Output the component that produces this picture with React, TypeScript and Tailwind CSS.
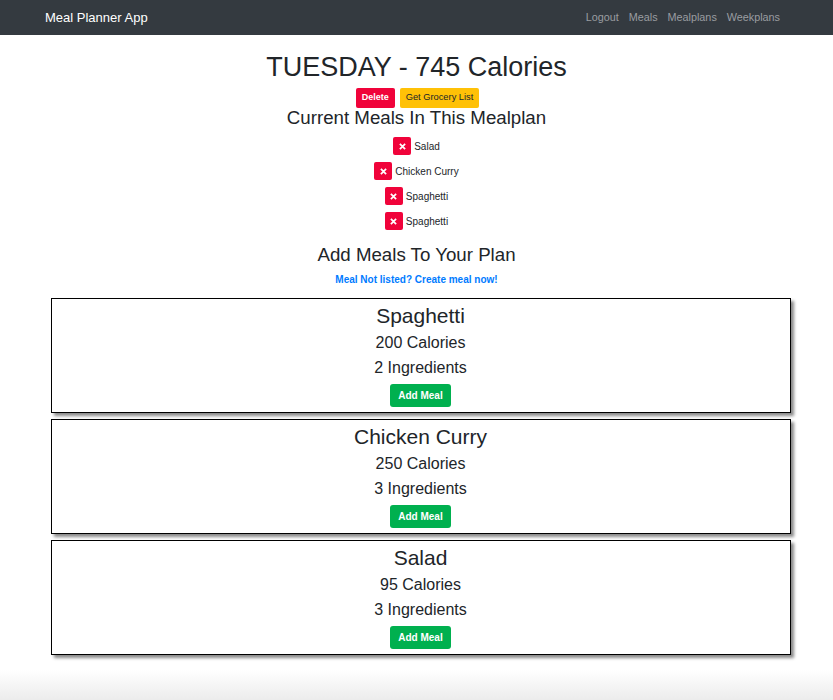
import React from "react"

const current = ["Salad", "Chicken Curry", "Spaghetti", "Spaghetti"]

const meals = [
  { name: "Spaghetti", calories: 200, ingredients: 2 },
  { name: "Chicken Curry", calories: 250, ingredients: 3 },
  { name: "Salad", calories: 95, ingredients: 3 },
]

function Navbar() {
  return (
    <nav className="h-[35px] bg-[#343a40] flex items-center justify-between pl-[45px] pr-[53px]">
      <span className="text-white text-[13px]">Meal Planner App</span>
      <div className="flex items-center gap-[10px] text-[10.8px] text-[#9a9da0]">
        <a>Logout</a>
        <a>Meals</a>
        <a>Mealplans</a>
        <a>Weekplans</a>
      </div>
    </nav>
  )
}

function MealCard({ name, calories, ingredients }: { name: string; calories: number; ingredients: number }) {
  return (
    <div className="h-[115px] border border-black bg-white shadow-[3px_3px_3px_#8a8a8a] flex flex-col items-center pt-[2px]">
      <h3 className="text-[21px] leading-[29px] text-[#212529]">{name}</h3>
      <p className="text-[16px] leading-[24px] mt-[1px] text-[#212529]">{calories} Calories</p>
      <p className="text-[16px] leading-[24px] mt-[1px] text-[#212529]">{ingredients} Ingredients</p>
      <button className="mt-[4px] h-[23px] px-[8px] rounded-[3px] bg-[#00b04f] text-white text-[10px] font-bold">
        Add Meal
      </button>
    </div>
  )
}

export default function App() {
  return (
    <div className="relative min-h-[700px] bg-white font-['Liberation_Sans',Arial,sans-serif] text-[#212529]">
      <Navbar />
      <main className="flex flex-col items-center">
        <h1 className="mt-[15px] text-[27px] leading-[34px]">TUESDAY - 745 Calories</h1>
        <div className="mt-[4px] flex gap-[5px] translate-x-[1px]">
          <button className="h-[20px] px-[6px] rounded-[2px] bg-[#f0033a] text-white text-[9px] font-bold">Delete</button>
          <button className="h-[20px] px-[6px] rounded-[2px] bg-[#ffc107] text-[#212529] text-[9.3px]">Get Grocery List</button>
        </div>
        <h2 className="text-[18.7px] leading-[22px] -mt-[1px]">Current Meals In This Mealplan</h2>
        <ul className="mt-[8px] flex flex-col items-center gap-[7px]">
          {current.map((m, i) => (
            <li key={i} className="flex items-center gap-[3px] text-[10px]">
              <span className="w-[18px] h-[18px] rounded-[2px] bg-[#f0033a] text-white flex items-center justify-center">
                <svg width="7" height="7" viewBox="0 0 8 8">
                  <path d="M1 1L7 7M7 1L1 7" stroke="white" strokeWidth="2" />
                </svg>
              </span>
              {m}
            </li>
          ))}
        </ul>
        <h2 className="mt-[13px] text-[18.7px] leading-[24px]">Add Meals To Your Plan</h2>
        <a className="mt-[5px] text-[10px] text-[#007bff] font-semibold">Meal Not listed? Create meal now!</a>
        <div className="mt-[11px] ml-[8px] w-[740px] flex flex-col gap-[6px]">
          {meals.map((m) => (
            <MealCard key={m.name} {...m} />
          ))}
        </div>
      </main>
      <div className="absolute left-0 right-0 bottom-0 h-[30px] bg-gradient-to-b from-white to-[#ececec]" />
    </div>
  )
}
